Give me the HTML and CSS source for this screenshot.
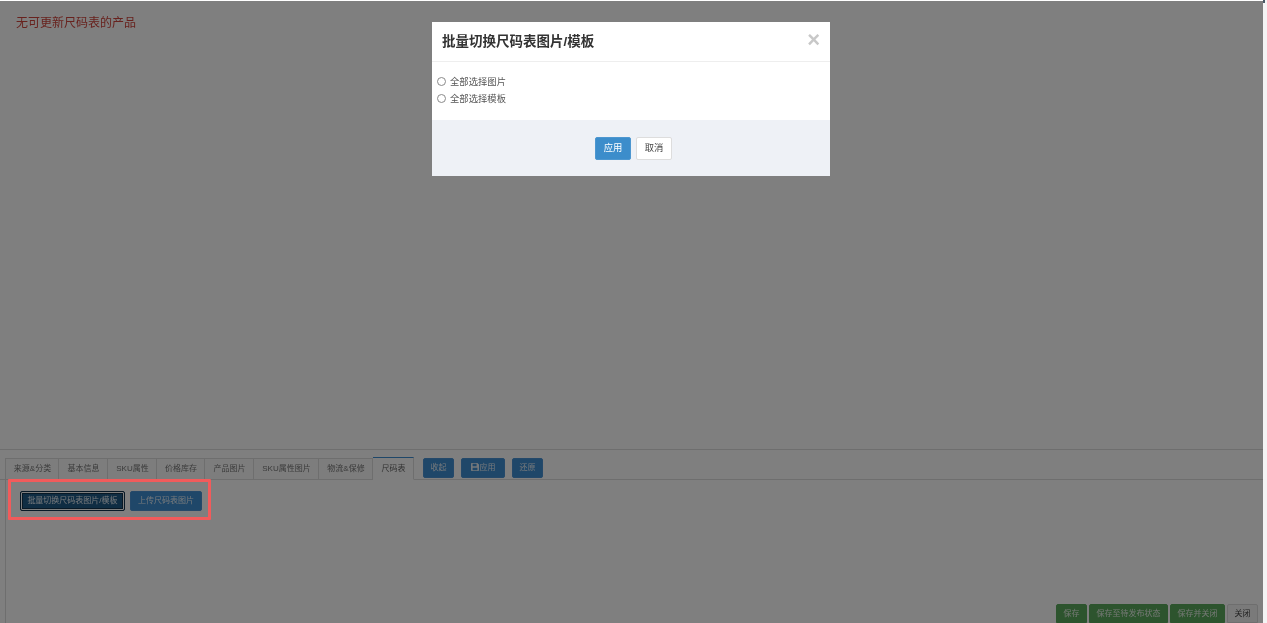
FILE: index.html
```html
<!DOCTYPE html>
<html lang="zh-CN">
<head>
<meta charset="utf-8">
<title>批量切换尺码表图片/模板</title>
<link rel="stylesheet" href="styles.css">
</head>
<body>
<div class="page">
  <p class="message">无可更新尺码表的产品</p>
  <section class="editor">
    <div class="tabbar">
      <ul class="tabs">
        <li class="tab t1">来源&amp;分类</li>
        <li class="tab t2">基本信息</li>
        <li class="tab t3">SKU属性</li>
        <li class="tab t4">价格库存</li>
        <li class="tab t5">产品图片</li>
        <li class="tab t6">SKU属性图片</li>
        <li class="tab t7">物流&amp;保修</li>
        <li class="tab t8 active">尺码表</li>
      </ul>
      <div class="tab-actions">
        <button class="btn blue w31">收起</button>
        <button class="btn blue w44">
          <svg class="save" viewBox="0 0 10 10" aria-hidden="true"><path fill="currentColor" fill-rule="evenodd" d="M1 0h7l2 2v7a1 1 0 0 1-1 1H1a1 1 0 0 1-1-1V1a1 1 0 0 1 1-1zm1 1v3h5V1zm0 5v3h6V6z"/></svg>应用
        </button>
        <button class="btn blue w31">还原</button>
      </div>
    </div>
    <div class="content">
      <div class="panel">
        <button class="btn blue focused">批量切换尺码表图片/模板</button>
        <button class="btn blue upload">上传尺码表图片</button>
      </div>
      <div class="footer">
        <button class="btn green w31">保存</button>
        <button class="btn green w79">保存至待发布状态</button>
        <button class="btn green w55">保存并关闭</button>
        <button class="btn plain w31">关闭</button>
      </div>
    </div>
  </section>
</div>
<div class="backdrop"></div>
<div class="scroll-corner"></div>
<div class="highlight"></div>
<div class="modal">
  <header class="modal-head">
    <h2 class="modal-title">批量切换尺码表图片/模板</h2>
    <span class="close">×</span>
  </header>
  <div class="modal-body">
    <label class="choice"><input class="radio" type="radio" name="mode">全部选择图片</label>
    <label class="choice"><input class="radio" type="radio" name="mode">全部选择模板</label>
  </div>
  <footer class="modal-foot">
    <button class="mbtn primary">应用</button>
    <button class="mbtn cancel">取消</button>
  </footer>
</div>
</body>
</html>
```
FILE: styles.css
```css
* { box-sizing: border-box; }
html, body { height: 100%; }
body {
  margin: 0;
  overflow: hidden;
  background: #f4f4f4;
  color: #333;
  font-family: "Liberation Sans", "Noto Sans CJK SC", sans-serif;
}
.page {
  height: 623px;
  width: 1263px;
  background: #fff;
  display: flex;
  flex-direction: column;
  filter: blur(.3px);
}
.message {
  margin: 0;
  padding: 16px 16px 0;
  font-size: 12px;
  line-height: 15px;
  color: #d0453d;
}
.editor {
  margin-top: auto;
  height: 174px;
  border-top: 1px solid #ddd;
  display: flex;
  flex-direction: column;
}
.tabbar {
  display: flex;
  align-items: flex-start;
  padding: 8px 0 0 5px;
  height: 30px;
  border-bottom: 1px solid #ddd;
  flex: none;
}
.tabs {
  display: flex;
  margin: 0;
  padding: 0;
  list-style: none;
  height: 22px;
}
.tab {
  height: 22px;
  border: 1px solid #ddd;
  border-left-width: 0;
  padding-left: 1px;
  font-size: 8px;
  line-height: 20px;
  text-align: center;
  color: #777;
  background: #fafafa;
}
.t1 { width: 54px; border-left-width: 1px; }
.t2 { width: 49px; }
.t3 { width: 49px; }
.t4 { width: 48px; }
.t5 { width: 49px; }
.t6 { width: 65px; }
.t7 { width: 54px; }
.t8 { width: 41px; }
.tab.active {
  background: #fff;
  border-top: 1px solid #3e8ed2;
  border-bottom-color: #fff;
  color: #666;
  height: 23px;
  margin-top: -1px;
  line-height: 22px;
}
.tab-actions {
  display: flex;
  gap: 7px;
  margin-left: 9px;
}
.btn {
  height: 20px;
  padding: 0;
  border: 1px solid #4a93d4;
  border-radius: 2px;
  font: 8px/18px "Liberation Sans", "Noto Sans CJK SC", sans-serif;
  white-space: nowrap;
}
.blue { background: #3e8ed2; color: #e8f0f6; }
.green { background: #5ba85c; color: #e8f0e8; border-color: #5ba85c; }
.plain { background: #f4f4f4; color: #444; border-color: #ddd; }
.w31 { width: 31px; }
.w44 { width: 44px; }
.w55 { width: 55px; }
.w79 { width: 79px; }
.save { width: 8px; height: 8px; margin-right: 1px; vertical-align: -1px; }
.content {
  flex: 1;
  margin-left: 5px;
  border-left: 1px solid #ddd;
  display: flex;
  flex-direction: column;
}
.panel {
  flex: 1;
  display: flex;
  align-items: flex-start;
  gap: 5px;
  padding: 11px 0 0 14px;
}
.focused {
  width: 105px;
  background: #1f5a87;
  border-color: #10324c;
  box-shadow: 0 0 0 1px #fff inset, 0 0 0 2px #10324c inset;
}
.upload { width: 72px; }
.footer {
  display: flex;
  justify-content: flex-end;
  align-items: flex-end;
  gap: 2px;
  padding-right: 5px;
  height: 19px;
  flex: none;
}
.footer .btn { border-bottom-left-radius: 0; border-bottom-right-radius: 0; height: 19px; }
.backdrop {
  position: absolute;
  top: 1px;
  left: 0;
  width: 1263px;
  height: 622px;
  background: rgba(0, 0, 0, .5);
}
.scroll-corner {
  position: absolute;
  top: 0;
  left: 1263px;
  width: 2px;
  height: 3px;
  background: #4a5a66;
}
.highlight {
  position: absolute;
  left: 8px;
  top: 479px;
  width: 203px;
  height: 41px;
  border: 3px solid #f25b5b;
  border-radius: 1px;
}
.modal {
  position: absolute;
  left: 432px;
  top: 22px;
  width: 398px;
  height: 154px;
  background: #fff;
  display: flex;
  flex-direction: column;
  filter: blur(.3px);
}
.modal-head {
  height: 40px;
  flex: none;
  border-bottom: 1px solid #eee;
  display: flex;
  align-items: center;
  justify-content: space-between;
  padding: 0 10px 3px 10px;
}
.modal-title {
  margin: 0;
  font-size: 13.5px;
  font-weight: 700;
  color: #333;
}
.close {
  font-size: 22px;
  line-height: 20px;
  font-weight: 700;
  color: #c8c8c8;
}
.modal-body {
  flex: 1;
  padding: 11px 5px 0;
}
.choice {
  display: flex;
  align-items: center;
  height: 17.5px;
  font-size: 9.33px;
  color: #555;
  position: relative;
  top: -1px;
}
.radio {
  appearance: none;
  width: 9px;
  height: 9px;
  margin: 1px 4px 0 0;
  border: 1px solid #8a8a8a;
  border-radius: 50%;
  background: #fff;
}
.modal-foot {
  height: 56px;
  flex: none;
  background: #eef1f6;
  display: flex;
  align-items: center;
  justify-content: center;
  gap: 5px;
  padding: 1px 0 0 5px;
}
.mbtn {
  height: 23px;
  padding: 0;
  border-radius: 2px;
  font: 9.33px/21px "Liberation Sans", "Noto Sans CJK SC", sans-serif;
}
.primary { width: 36px; background: #3c8dcb; border: 1px solid #4d97d0; color: #fff; }
.cancel { width: 36px; background: #fff; border: 1px solid #ddd; color: #444; }
```
